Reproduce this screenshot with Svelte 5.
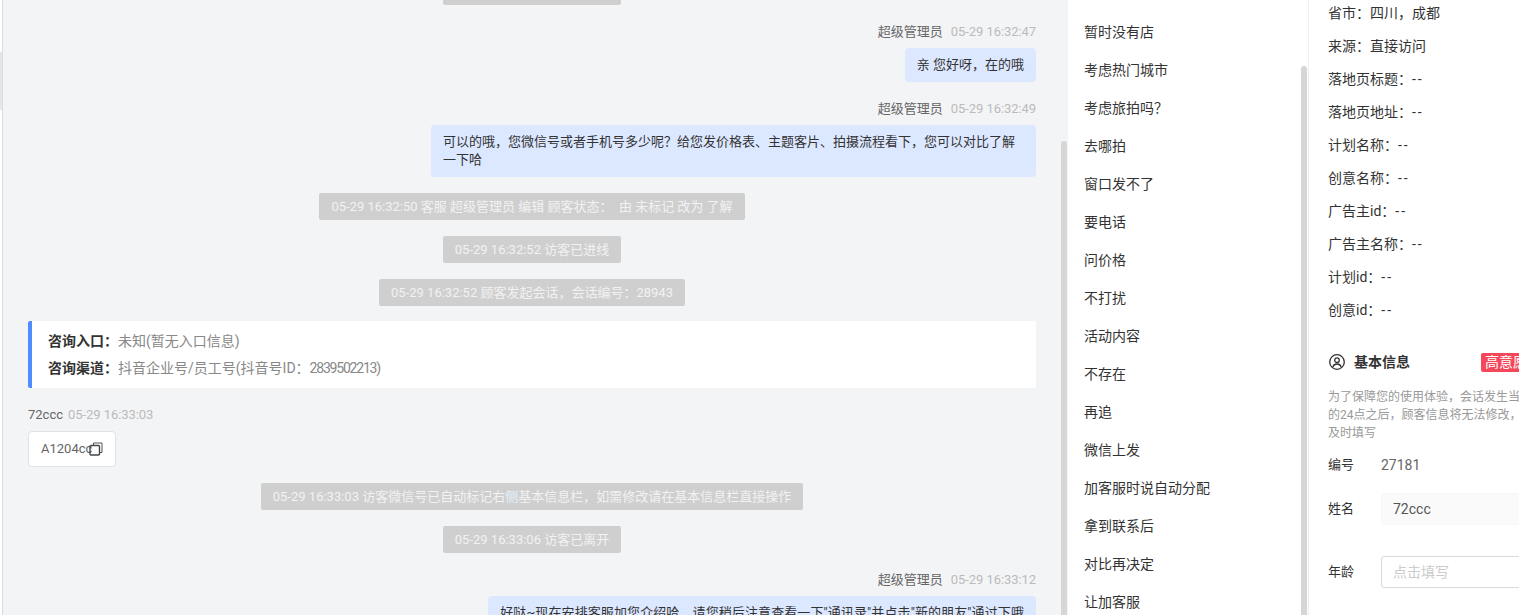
<script lang="ts">
  import { onMount } from 'svelte';

  const replies = [
    '暂时没有店', '考虑热门城市', '考虑旅拍吗？', '去哪拍', '窗口发不了', '要电话', '问价格', '不打扰',
    '活动内容', '不存在', '再追', '微信上发', '加客服时说自动分配', '拿到联系后', '对比再决定', '让加客服'
  ];

  const sourceInfo = [
    ['省市', '四川，成都'],
    ['来源', '直接访问'],
    ['落地页标题', '--'],
    ['落地页地址', '--'],
    ['计划名称', '--'],
    ['创意名称', '--'],
    ['广告主id', '--'],
    ['广告主名称', '--'],
    ['计划id', '--'],
    ['创意id', '--']
  ];

  let chatEl: HTMLElement;
  let sideEl: HTMLElement;

  // the panels are scrolled part way down in this view
  onMount(() => {
    chatEl.scrollTop = 22;
    sideEl.scrollTop = 3;
  });
</script>

<div class="page">
  <div class="rail"><div class="rail-tab"></div></div>

  <main class="chat" bind:this={chatEl}>
    <div class="sys">05-29 16:32:46 访客已进线</div>

    <div class="msg mine">
      <div class="who"><span>超级管理员</span><time>05-29 16:32:47</time></div>
      <div class="bubble">亲 您好呀，在的哦</div>
    </div>

    <div class="msg mine">
      <div class="who"><span>超级管理员</span><time>05-29 16:32:49</time></div>
      <div class="bubble">可以的哦，您微信号或者手机号多少呢？给您发价格表、主题客片、拍摄流程看下，您可以对比了解一下哈</div>
    </div>

    <div class="sys">05-29 16:32:50 客服 超级管理员 编辑 顾客状态：&nbsp; 由 未标记 改为 了解</div>
    <div class="sys">05-29 16:32:52 访客已进线</div>
    <div class="sys">05-29 16:32:52 顾客发起会话，会话编号：28943</div>

    <div class="entry">
      <p><b>咨询入口：</b>未知(暂无入口信息)</p>
      <p><b>咨询渠道：</b>抖音企业号/员工号(抖音号ID：<span class="tight">2839502213)</span></p>
    </div>

    <div class="msg visitor">
      <div class="who"><span>72ccc</span><time>05-29 16:33:03</time></div>
      <div class="wx-card">
        A1204cc
        <svg class="copy" viewBox="0 0 14 14" width="14" height="14" aria-hidden="true">
          <path d="M4.500 3V1h8.500v9.500h-2" fill="none" stroke="#555" stroke-width="1" />
          <rect x="1" y="3.500" width="9.500" height="9.500" rx="1" fill="none" stroke="#444" stroke-width="1.400" />
        </svg>
      </div>
    </div>

    <div class="sys">05-29 16:33:03 访客微信号已自动标记右<span class="picked">侧</span>基本信息栏，如需修改请在基本信息栏直接操作</div>
    <div class="sys">05-29 16:33:06 访客已离开</div>

    <div class="msg mine">
      <div class="who"><span>超级管理员</span><time>05-29 16:33:12</time></div>
      <div class="bubble roomy">好哒~现在安排客服加您介绍哈，请您稍后注意查看一下"通讯录"并点击"新的朋友"通过下哦</div>
    </div>
  </main>

  <div class="thumb chat-thumb"></div>

  <aside class="replies">
    {#each replies as r}
      <div class="reply">{r}</div>
    {/each}
  </aside>

  <div class="thumb side-thumb"></div>

  <section class="info" bind:this={sideEl}>
    {#each sourceInfo as [k, v]}
      <div class="kv">{k}：<span class:dash={v === '--'}>{v}</span></div>
    {/each}

    <div class="head">
      <svg viewBox="0 0 16 16" width="16" height="16" aria-hidden="true">
        <circle cx="8" cy="8" r="7.300" fill="none" stroke="#333" stroke-width="1.300" />
        <circle cx="8" cy="6.200" r="2.300" fill="none" stroke="#333" stroke-width="1.300" />
        <path d="M3.800 13c.6-2 2.200-3 4.200-3s3.600 1 4.200 3" fill="none" stroke="#333" stroke-width="1.300" />
      </svg>
      <strong>基本信息</strong>
      <em class="tag">高意愿</em>
    </div>

    <p class="note">为了保障您的使用体验，会话发生当日<br />的24点之后，顾客信息将无法修改，请<br />及时填写</p>

    <div class="field plain"><label for="cid">编号</label><span id="cid">27181</span></div>
    <div class="field"><label for="cname">姓名</label><input id="cname" class="filled" value="72ccc" /></div>
    <div class="field"><label for="cage">年龄</label><input id="cage" placeholder="点击填写" /></div>
  </section>
</div>

<style>
  :global(body) {
    margin: 0;
    overflow: hidden;
    background: #fff;
  }

  .page {
    position: relative;
    display: flex;
    width: 1519px;
    height: 615px;
    overflow: hidden;
    font: 13px/18px Roboto, "Noto Sans CJK SC", sans-serif;
    color: #333;
  }

  .rail {
    flex: none;
    width: 2px;
    border-right: 1px solid #ddd;
  }
  .rail-tab {
    height: 58px;
    margin-top: 52px;
    background: #e6e6e6;
  }

  .chat {
    flex: none;
    box-sizing: border-box;
    width: 1065px;
    padding: 0 32px 40px 25px;
    background: #f3f4f6;
    overflow: hidden;
    display: flex;
    flex-direction: column;
    gap: 16px;
  }

  .sys {
    flex: none;
    align-self: center;
    height: 27px;
    padding: 0 12px;
    line-height: 27px;
    border-radius: 2px;
    background: #cfcfcf;
    color: #f2f2f2;
    white-space: nowrap;
  }
  .picked {
    color: #e4f3ff;
  }

  .msg {
    flex: none;
    margin-top: 2px;
  }
  .msg.mine {
    display: flex;
    flex-direction: column;
    align-items: flex-end;
  }
  .who {
    height: 18px;
    margin-bottom: 7px;
    color: #666;
    white-space: nowrap;
  }
  .who time {
    margin-left: 8px;
    color: #bbb;
    letter-spacing: -.07px;
  }
  .visitor .who time {
    margin-left: 5px;
  }

  .bubble {
    box-sizing: border-box;
    max-width: 605px;
    padding: 8px 12px;
    border-radius: 4px;
    background: #dce8ff;
    color: #333;
  }
  .bubble.roomy {
    letter-spacing: .1px;
  }

  .entry {
    flex: none;
    margin-top: -1px;
    padding: 7px 16px 6px;
    border-left: 4px solid #4e8cff;
    border-radius: 2px;
    background: #fff;
    color: #888;
    font-size: 14px;
  }
  .entry p {
    margin: 0;
    height: 27px;
    line-height: 27px;
  }
  .entry b {
    color: #333;
    font-weight: 700;
  }
  .tight {
    letter-spacing: -1.2px;
  }

  .wx-card {
    display: inline-flex;
    align-items: center;
    box-sizing: border-box;
    height: 36px;
    padding: 0 12px;
    border: 1px solid #e2e2e2;
    border-radius: 4px;
    background: #fff;
    color: #666;
  }
  .copy {
    margin-left: -3px;
  }

  .thumb {
    position: absolute;
    width: 6px;
    bottom: 0;
    border-radius: 3px 3px 0 0;
    background: #d6d6d6;
  }
  .chat-thumb {
    left: 1061px;
    top: 141px;
  }
  .side-thumb {
    left: 1301px;
    top: 66px;
  }

  .replies {
    flex: none;
    box-sizing: border-box;
    width: 240px;
    padding: 13px 0 0 16px;
    background: #fff;
    overflow: hidden;
    font-size: 14px;
  }
  .reply {
    height: 38px;
    line-height: 38px;
    white-space: nowrap;
  }

  .info {
    flex: 1;
    min-width: 0;
    padding: 0 0 100px 19px;
    border-left: 1px solid #eee;
    overflow: hidden;
    font-size: 14px;
  }

  .kv {
    height: 33px;
    line-height: 33px;
  }
  .dash {
    letter-spacing: 2px;
  }

  .head {
    display: flex;
    align-items: center;
    height: 20px;
    margin-top: 25px;
  }
  .head svg {
    flex: none;
    margin-left: 1px;
  }
  .head strong {
    flex: none;
    width: 56px;
    margin-left: 9px;
    font-weight: 700;
  }
  .tag {
    flex: none;
    margin-left: 71px;
    padding: 0 4px;
    line-height: 19px;
    border-radius: 2px;
    background: #f5475a;
    color: #fff;
    font-style: normal;
    white-space: nowrap;
  }

  .note {
    margin: 16px 0 14px;
    font-size: 12px;
    color: #999;
    white-space: nowrap;
  }

  .field {
    display: flex;
    align-items: center;
    margin-bottom: 31px;
  }
  .field.plain {
    height: 18px;
    margin-bottom: 19px;
    color: #666;
  }
  .field label {
    flex: none;
    width: 53px;
    font-size: 13px;
    color: #333;
  }
  .field input {
    flex: none;
    box-sizing: border-box;
    width: 240px;
    height: 32px;
    padding: 0 11px;
    border: 1px solid #d9d9d9;
    border-radius: 3px;
    outline: none;
    background: #fff;
    font: inherit;
    color: #555;
  }
  .field input::placeholder {
    color: #ccc;
  }
  .field input.filled {
    border-color: #f7f7f7;
    background: #fafafa;
  }
</style>
